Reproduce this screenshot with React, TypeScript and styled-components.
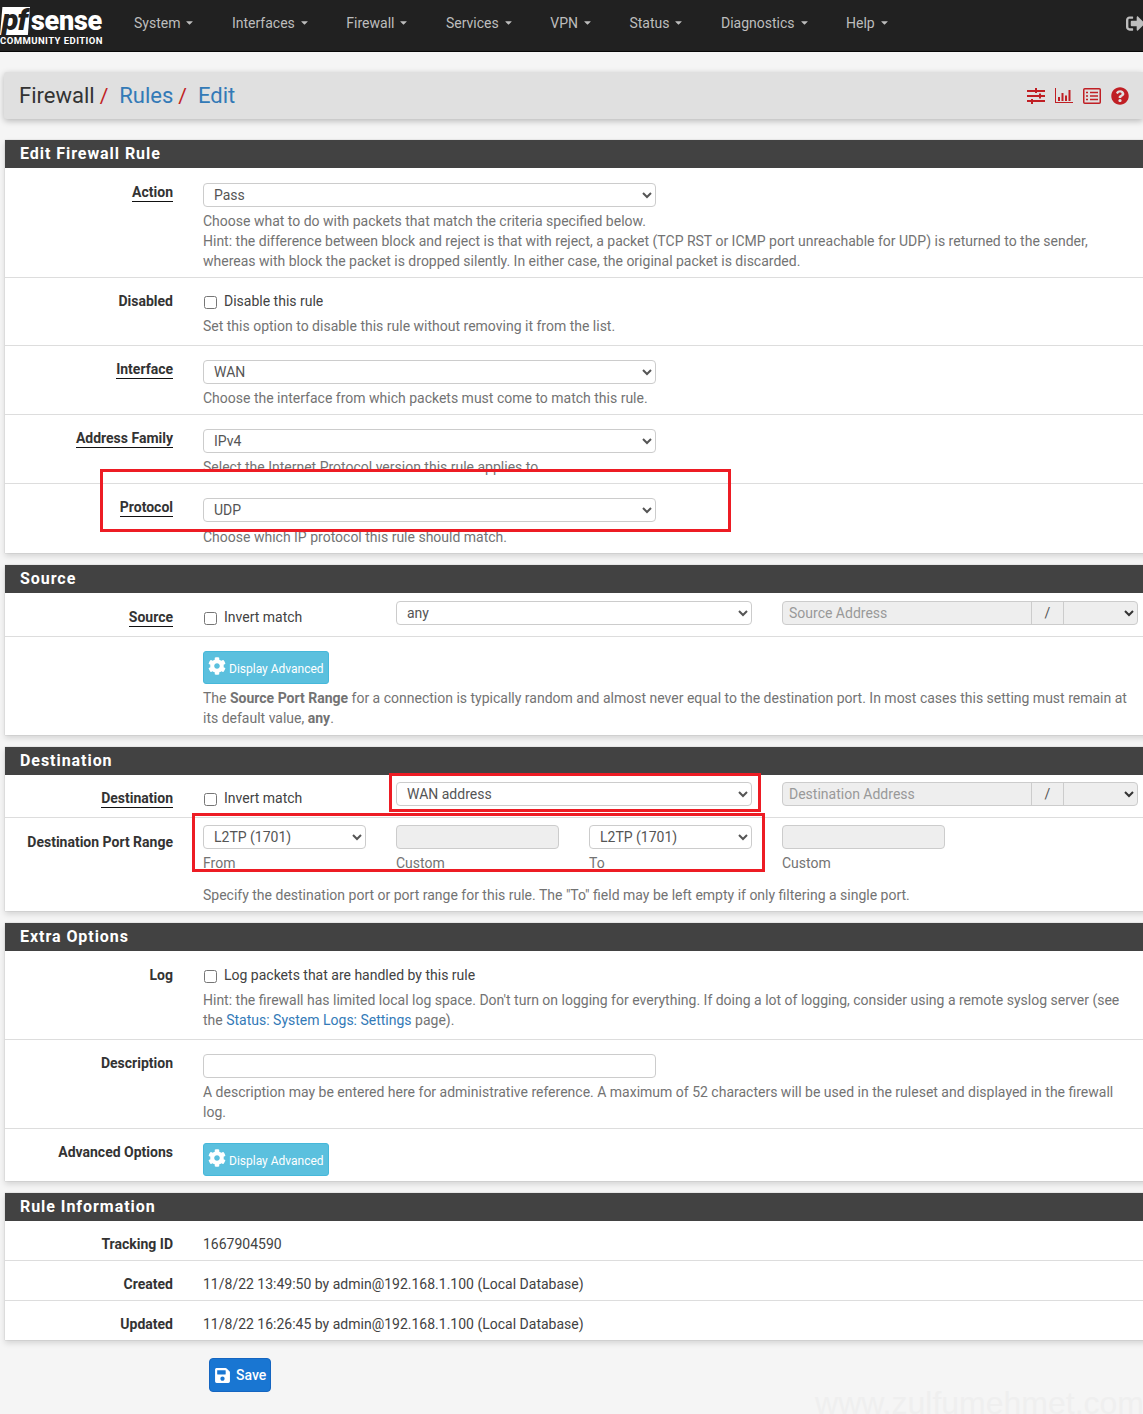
import styled, { createGlobalStyle } from 'styled-components';
import { FaCaretDown, FaCog, FaQuestionCircle, FaSave, FaSignOutAlt } from 'react-icons/fa';

const GlobalStyle = createGlobalStyle`
  html, body {
    margin: 0;
    padding: 0;
    background: #f5f5f5;
    overflow: hidden;
  }
  * { box-sizing: border-box; }
`;

const NAV_ITEMS = ['System', 'Interfaces', 'Firewall', 'Services', 'VPN', 'Status', 'Diagnostics', 'Help'];

function SlidersIcon() {
  return (
    <svg width="18" height="16" viewBox="0 0 18 16" fill="#c01f24">
      <rect x="0" y="2" width="18" height="2" />
      <rect x="8" y="0" width="2" height="5" />
      <rect x="0" y="7" width="18" height="2" />
      <rect x="12" y="5.5" width="2" height="5" />
      <rect x="0" y="12" width="18" height="2" />
      <rect x="4" y="11" width="2" height="5" />
    </svg>
  );
}

function ChartIcon() {
  return (
    <svg width="18" height="15" viewBox="0 0 18 15" fill="#c01f24">
      <rect x="0" y="0" width="1" height="15" />
      <rect x="0" y="14" width="18" height="1" />
      <rect x="3" y="9" width="2" height="4" />
      <rect x="6.5" y="5" width="2" height="8" />
      <rect x="10" y="7.5" width="2" height="5.5" />
      <rect x="13.5" y="2" width="2" height="11" />
    </svg>
  );
}

function ListIcon() {
  return (
    <svg width="18" height="16" viewBox="0 0 18 16" fill="none" stroke="#c01f24">
      <rect x="0.75" y="0.75" width="16.5" height="14.5" rx="1" strokeWidth="1.5" />
      <path d="M3 4.5h2M7 4.5h8M3 8h2M7 8h8M3 11.5h2M7 11.5h8" strokeWidth="1.6" />
    </svg>
  );
}

export default function App() {
  return (
    <Page>
      <GlobalStyle />
      <Navbar>
        <Logo>
          <LogoMark>
            <PfBox>pf</PfBox>
            <SenseText>sense</SenseText>
          </LogoMark>
          <Edition>COMMUNITY EDITION</Edition>
        </Logo>
        <NavList>
          {NAV_ITEMS.map((item) => (
            <NavItem key={item}>
              {item}
              <FaCaretDown size={11} />
            </NavItem>
          ))}
        </NavList>
        <Logout>
          <FaSignOutAlt size={19} />
        </Logout>
      </Navbar>

      <PageHeader>
        <Crumbs>
          <span>Firewall</span>
          <Slash>/</Slash>
          <CrumbLink>Rules</CrumbLink>
          <Slash>/</Slash>
          <CrumbLink>Edit</CrumbLink>
        </Crumbs>
        <HeaderIcons>
          <SlidersIcon />
          <ChartIcon />
          <ListIcon />
          <FaQuestionCircle size={18} color="#c01f24" />
        </HeaderIcons>
      </PageHeader>

      <Panel>
        <PanelHeading>Edit Firewall Rule</PanelHeading>
        <Row $pad="14px 0 6px">
          <Label><Under>Action</Under></Label>
          <Control>
            <WideSelect defaultValue="Pass"><option>Pass</option></WideSelect>
            <Help>
              Choose what to do with packets that match the criteria specified below.
              <br />
              Hint: the difference between block and reject is that with reject, a packet (TCP RST or ICMP port unreachable for UDP) is returned to the sender, whereas with block the packet is dropped silently. In either case, the original packet is discarded.
            </Help>
          </Control>
        </Row>
        <Row $pad="13px 0 9px">
          <Label>Disabled</Label>
          <Control>
            <CheckLine><input type="checkbox" />Disable this rule</CheckLine>
            <Help $gap={5}>Set this option to disable this rule without removing it from the list.</Help>
          </Control>
        </Row>
        <Row>
          <Label><Under>Interface</Under></Label>
          <Control>
            <WideSelect defaultValue="WAN"><option>WAN</option></WideSelect>
            <Help>Choose the interface from which packets must come to match this rule.</Help>
          </Control>
        </Row>
        <Row>
          <Label><Under>Address Family</Under></Label>
          <Control>
            <WideSelect defaultValue="IPv4"><option>IPv4</option></WideSelect>
            <Help>Select the Internet Protocol version this rule applies to.</Help>
          </Control>
        </Row>
        <Row $pad="13px 0 6px" $last>
          <Label><Under>Protocol</Under></Label>
          <Control>
            <WideSelect defaultValue="UDP"><option>UDP</option></WideSelect>
            <Help $gap={5}>Choose which IP protocol this rule should match.</Help>
          </Control>
        </Row>
      </Panel>

      <Panel>
        <PanelHeading>Source</PanelHeading>
        <Row $pad="14px 0 9px">
          <Label><Under>Source</Under></Label>
          <Control>
            <FieldGrid $lift={6}>
              <CheckCell><input type="checkbox" />Invert match</CheckCell>
              <SpanTwo>
                <FieldSelect defaultValue="any"><option>any</option></FieldSelect>
              </SpanTwo>
              <AddressGroup placeholder="Source Address" />
            </FieldGrid>
          </Control>
        </Row>
        <Row $pad="14px 0 7px" $last>
          <Label />
          <Control>
            <AdvancedButton><FaCog size={18} />Display Advanced</AdvancedButton>
            <Help>
              The <strong>Source Port Range</strong> for a connection is typically random and almost never equal to the destination port. In most cases this setting must remain at its default value, <strong>any</strong>.
            </Help>
          </Control>
        </Row>
      </Panel>

      <Panel>
        <PanelHeading>Destination</PanelHeading>
        <Row $pad="13px 0 9px">
          <Label><Under>Destination</Under></Label>
          <Control>
            <FieldGrid $lift={6}>
              <CheckCell><input type="checkbox" />Invert match</CheckCell>
              <SpanTwo>
                <FieldSelect defaultValue="WAN address"><option>WAN address</option></FieldSelect>
              </SpanTwo>
              <AddressGroup placeholder="Destination Address" />
            </FieldGrid>
          </Control>
        </Row>
        <Row $pad="14px 0 6px" $last>
          <Label>Destination Port Range</Label>
          <Control>
            <FieldGrid $lift={7}>
              <div>
                <FieldSelect defaultValue="L2TP (1701)"><option>L2TP (1701)</option></FieldSelect>
                <SubLabel>From</SubLabel>
              </div>
              <div>
                <FieldInput disabled />
                <SubLabel>Custom</SubLabel>
              </div>
              <div>
                <FieldSelect defaultValue="L2TP (1701)"><option>L2TP (1701)</option></FieldSelect>
                <SubLabel>To</SubLabel>
              </div>
              <div>
                <FieldInput disabled />
                <SubLabel>Custom</SubLabel>
              </div>
            </FieldGrid>
            <Help $gap={12}>
              Specify the destination port or port range for this rule. The "To" field may be left empty if only filtering a single port.
            </Help>
          </Control>
        </Row>
      </Panel>

      <Panel>
        <PanelHeading>Extra Options</PanelHeading>
        <Row $pad="14px 0 9px">
          <Label>Log</Label>
          <Control>
            <CheckLine><input type="checkbox" />Log packets that are handled by this rule</CheckLine>
            <Help $gap={5}>
              Hint: the firewall has limited local log space. Don't turn on logging for everything. If doing a lot of logging, consider using a remote syslog server (see the <HelpLink>Status: System Logs: Settings</HelpLink> page).
            </Help>
          </Control>
        </Row>
        <Row>
          <Label>Description</Label>
          <Control>
            <DescriptionInput />
            <Help>
              A description may be entered here for administrative reference. A maximum of 52 characters will be used in the ruleset and displayed in the firewall log.
            </Help>
          </Control>
        </Row>
        <Row $pad="13px 0 5px" $last>
          <Label>Advanced Options</Label>
          <AdvancedControl>
            <AdvancedButton><FaCog size={18} />Display Advanced</AdvancedButton>
          </AdvancedControl>
        </Row>
      </Panel>

      <Panel>
        <PanelHeading>Rule Information</PanelHeading>
        <Row $pad="13px 0 6px">
          <Label>Tracking ID</Label>
          <Value>1667904590</Value>
        </Row>
        <Row $pad="13px 0 6px">
          <Label>Created</Label>
          <Value>11/8/22 13:49:50 by admin@192.168.1.100 (Local Database)</Value>
        </Row>
        <Row $pad="13px 0 6px" $last>
          <Label>Updated</Label>
          <Value>11/8/22 16:26:45 by admin@192.168.1.100 (Local Database)</Value>
        </Row>
      </Panel>

      <SaveButton><FaSave size={17} />Save</SaveButton>
      <Watermark>www.zulfumehmet.com</Watermark>

      <RedBox $x={100} $y={469} $w={631} $h={63} />
      <RedBox $x={389} $y={773} $w={372} $h={39} />
      <RedBox $x={192} $y={813} $w={573} $h={59} />
    </Page>
  );
}

function AddressGroup({ placeholder }: { placeholder: string }) {
  return (
    <Group>
      <GroupInput disabled placeholder={placeholder} />
      <GroupSlash>/</GroupSlash>
      <GroupSelect disabled />
    </Group>
  );
}

const Page = styled.div`
  position: relative;
  width: 1143px;
  height: 1414px;
  overflow: hidden;
  background: #f5f5f5;
  font-family: Roboto, sans-serif;
  font-size: 14px;
  line-height: 20px;
  color: #333;
`;

const Navbar = styled.header`
  display: flex;
  align-items: center;
  height: 52px;
  background: #212121;
  border-bottom: 1px solid #080808;
  overflow: hidden;
`;

const Logo = styled.div`
  width: 105px;
  flex: none;
`;

const LogoMark = styled.div`
  display: flex;
  align-items: flex-end;
  height: 28px;
  margin-top: 2px;
`;

const PfBox = styled.span`
  width: 30px;
  height: 28px;
  background: #fff;
  color: #212121;
  font: italic 900 30px/25px Roboto, sans-serif;
  padding-left: 2px;
  letter-spacing: -1px;
  clip-path: polygon(8% 0, 100% 0, 93% 100%, 0 100%);
`;

const SenseText = styled.span`
  margin-left: 1px;
  color: #fff;
  font: 900 27px/27px Roboto, sans-serif;
  letter-spacing: -0.3px;
`;

const Edition = styled.div`
  color: #fff;
  font: 700 9.5px/10px Roboto, sans-serif;
  letter-spacing: 0.45px;
  margin-top: 1px;
  white-space: nowrap;
`;

const NavList = styled.nav`
  display: flex;
  gap: 36.5px;
  margin: -6px 0 0 29px;
`;

const NavItem = styled.span`
  display: flex;
  align-items: center;
  gap: 4px;
  color: #bdbdbd;
  font-size: 14px;
`;

const Logout = styled.span`
  display: flex;
  margin: -4px -2px 0 auto;
  color: #bdbdbd;
`;

const PageHeader = styled.section`
  display: flex;
  align-items: center;
  justify-content: space-between;
  height: 47px;
  margin: 20px 0 21px 4px;
  padding: 0 14px 0 15px;
  background: #e0e0e0;
  border-radius: 3px 0 0 3px;
  box-shadow: 0 2px 6px rgba(0, 0, 0, 0.25);
`;

const Crumbs = styled.h1`
  display: flex;
  margin: 0;
  font-size: 22px;
  line-height: 30px;
  font-weight: 400;
  color: #333;
`;

const Slash = styled.span`
  color: #c01f24;
  margin: 0 11px 0 5px;
  font-size: 21px;
`;

const CrumbLink = styled.a`
  color: #337ab7;
`;

const HeaderIcons = styled.div`
  display: flex;
  align-items: center;
  gap: 10px;
`;

const Panel = styled.section`
  margin: 0 -10px 12px 5px;
  background: #fff;
  box-shadow: 0 0 1px rgba(0, 0, 0, 0.25), 0 3px 6px rgba(0, 0, 0, 0.14);
`;

const PanelHeading = styled.h2`
  height: 28px;
  margin: 0;
  padding-left: 15px;
  background: #424242;
  color: #fff;
  font-size: 16px;
  line-height: 28px;
  font-weight: 700;
  letter-spacing: 0.95px;
`;

const Row = styled.div<{ $pad?: string; $last?: boolean }>`
  display: grid;
  grid-template-columns: 168px 1fr;
  column-gap: 30px;
  padding: ${(p) => p.$pad ?? '13px 0 6px'};
  border-bottom: ${(p) => (p.$last ? 'none' : '1px solid #ddd')};
`;

const Label = styled.div`
  text-align: right;
  font-weight: 700;
  color: #333;
`;

const Under = styled.span`
  display: inline-block;
  line-height: 17px;
  border-bottom: 1px solid #111;
`;

const Control = styled.div`
  min-width: 0;
  width: 933px;
`;

const AdvancedControl = styled(Control)`
  margin-top: 1px;
`;

const Value = styled.div`
  color: #424242;
`;

const Help = styled.p<{ $gap?: number }>`
  margin: ${(p) => p.$gap ?? 4}px 0 0;
  color: #737373;

  strong {
    font-weight: 700;
  }
`;

const HelpLink = styled.a`
  color: #337ab7;
`;

const baseSelect = `
  display: block;
  height: 24px;
  padding: 0 6px;
  background-color: #fff;
  border: 1px solid #ccc;
  border-radius: 4px;
  color: #555;
  font-family: Roboto, sans-serif;
  font-size: 14px;
`;

const WideSelect = styled.select`
  ${baseSelect}
  width: 453px;
  margin-top: 1px;
`;

const FieldSelect = styled.select`
  ${baseSelect}
  width: 100%;
`;

const FieldInput = styled.input`
  display: block;
  width: 100%;
  height: 24px;
  background: #eee;
  border: 1px solid #ccc;
  border-radius: 4px;
`;

const DescriptionInput = styled.input`
  display: block;
  width: 453px;
  height: 24px;
  margin-top: 1px;
  background: #fff;
  border: 1px solid #ccc;
  border-radius: 4px;
`;

const CheckLine = styled.label`
  display: flex;
  align-items: center;
  height: 20px;
  color: #424242;

  input {
    width: 13px;
    height: 13px;
    margin: 2px 7px 0 1px;
  }
`;

const CheckCell = styled(CheckLine)`
  margin-top: 6px;
`;

const FieldGrid = styled.div<{ $lift: number }>`
  display: grid;
  grid-template-columns: repeat(5, 163px);
  column-gap: 30px;
  align-items: start;
  margin-top: -${(p) => p.$lift}px;
`;

const SpanTwo = styled.div`
  grid-column: span 2;
`;

const SubLabel = styled.div`
  margin-top: 4px;
  color: #737373;
`;

const Group = styled.div`
  grid-column: span 2;
  display: flex;
  height: 24px;
  background: #eee;
  border: 1px solid #ccc;
  border-radius: 4px;
`;

const GroupInput = styled.input`
  flex: 1;
  min-width: 0;
  padding: 0 6px 1px;
  background: transparent;
  border: none;
  font-family: Roboto, sans-serif;
  font-size: 14px;

  &::placeholder {
    color: #999;
  }
`;

const GroupSlash = styled.span`
  width: 33px;
  line-height: 22px;
  text-align: center;
  color: #555;
  border-left: 1px solid #ccc;
  border-right: 1px solid #ccc;
`;

const GroupSelect = styled.select`
  width: 73px;
  background: transparent;
  border: none;
  color: #333;
  opacity: 1;
`;

const AdvancedButton = styled.button`
  display: flex;
  align-items: center;
  gap: 3px;
  width: 126px;
  height: 33px;
  padding: 2px 0 0 4px;
  background: #5bc0de;
  border: 1px solid #46b8da;
  border-radius: 3px;
  color: #fff;
  font-family: Roboto, sans-serif;
  font-size: 12px;

  svg {
    margin-top: -5px;
  }
`;

const SaveButton = styled.button`
  display: flex;
  align-items: center;
  gap: 5px;
  width: 62px;
  height: 34px;
  margin: 18px 0 0 209px;
  padding: 0 0 0 4px;
  background: #1976d2;
  border: 1px solid #1565c0;
  border-radius: 4px;
  color: #fff;
  font-family: Roboto, sans-serif;
  font-size: 14px;
  font-weight: 500;
`;

const Watermark = styled.div`
  position: absolute;
  right: -1px;
  top: 1384px;
  color: #efefef;
  font: 400 32px/38px "Liberation Sans", sans-serif;
  white-space: nowrap;
`;

const RedBox = styled.div<{ $x: number; $y: number; $w: number; $h: number }>`
  position: absolute;
  left: ${(p) => p.$x}px;
  top: ${(p) => p.$y}px;
  width: ${(p) => p.$w}px;
  height: ${(p) => p.$h}px;
  border: 3px solid #ed1c24;
  pointer-events: none;
`;
